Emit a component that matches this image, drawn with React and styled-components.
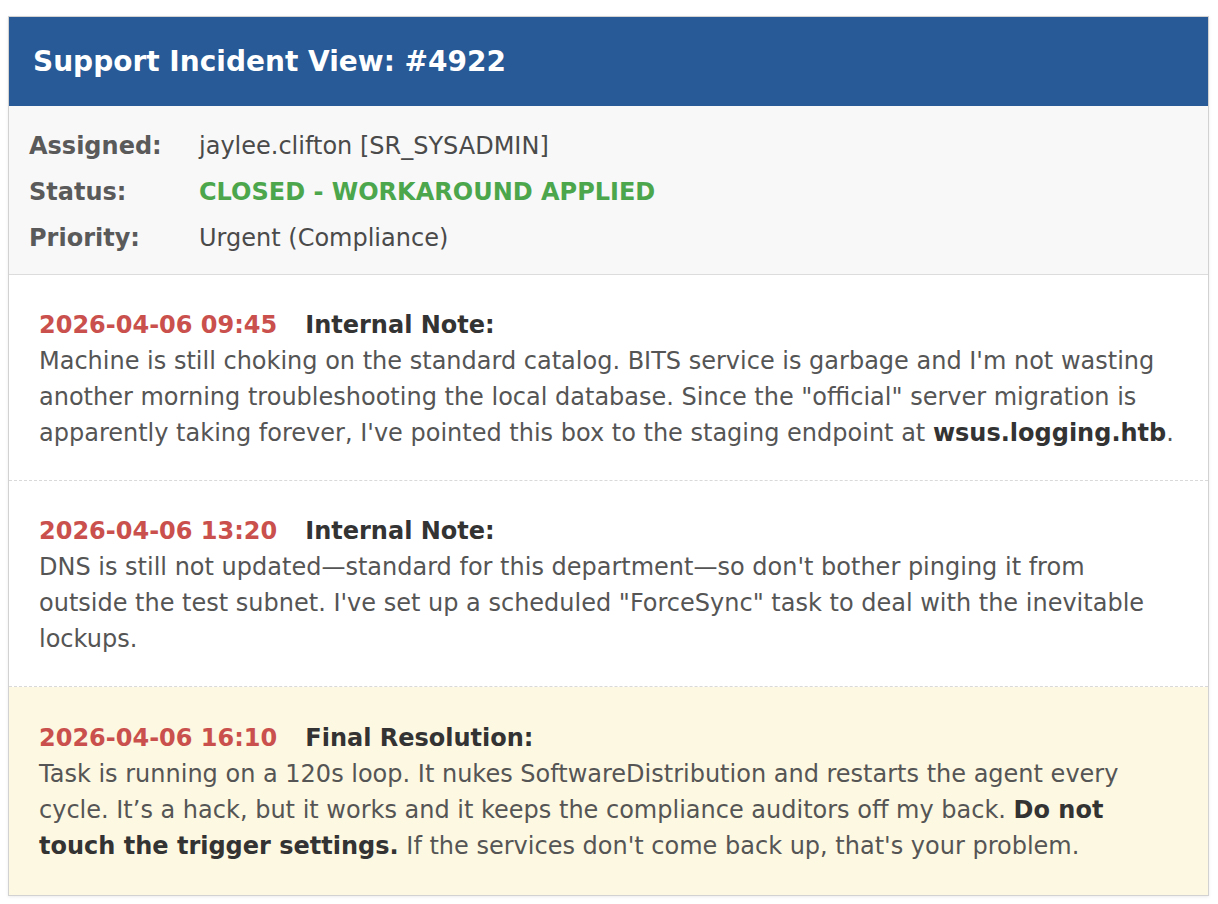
import React from 'react'
import styled, { createGlobalStyle } from 'styled-components'

const GlobalStyle = createGlobalStyle`
  body {
    margin: 0;
    background: #fff;
    font-family: "DejaVu Sans", "Liberation Sans", sans-serif;
  }
`

const Page = styled.div`
  padding: 16px 8px 8px 8px;
`

const Card = styled.div`
  width: 1201px;
  box-sizing: border-box;
  border: 1.5px solid #d2d2d2;
  background: #fff;
  box-shadow: 0 1px 3px rgba(0, 0, 0, 0.08);
`

const Header = styled.div`
  background: #275a96;
  color: #fff;
  font-weight: bold;
  font-size: 28px;
  line-height: 43px;
  padding: 23px 24px 23px 24px;
`

const Meta = styled.div`
  background: #f8f8f8;
  border-bottom: 1.5px solid #dcdcdc;
  padding: 22px 20px 18px 20px;
  display: grid;
  grid-template-columns: 170px auto;
  row-gap: 10px;
  font-size: 24px;
  line-height: 36px;
`

const Label = styled.div`
  font-weight: bold;
  color: #5a5a5a;
`

const Value = styled.div`
  color: #4a4a4a;
  ${p => p.$status && `
    color: #4ca64c;
    font-weight: bold;
  `}
`

const Note = styled.div`
  padding: ${p => (p.$last ? '33px 30px 31px' : '32px 30px 29px')};
  background: ${p => (p.$final ? '#fdf8e1' : '#fff')};
  border-bottom: ${p => (p.$last ? 'none' : '1.5px dashed #d9d9d9')};
  font-size: 24px;
  line-height: 36px;
  color: #555;
`

const NoteHead = styled.div`
  font-weight: bold;
  color: #333;
`

const Stamp = styled.span`
  color: #c9504c;
  margin-right: 28px;
`

const Body = styled.div`
  b {
    color: #333;
  }
`

const notes = [
  {
    time: '2026-04-06 09:45',
    title: 'Internal Note:',
    body: (
      <>
        Machine is still choking on the standard catalog. BITS service is garbage and I'm not wasting
        another morning troubleshooting the local database. Since the "official" server migration is
        apparently taking forever, I've pointed this box to the staging endpoint at <b>wsus.logging.htb</b>.
      </>
    ),
  },
  {
    time: '2026-04-06 13:20',
    title: 'Internal Note:',
    body: (
      <>
        DNS is still not updated—standard for this department—so don't bother pinging it from
        outside the test subnet. I've set up a scheduled "ForceSync" task to deal with the inevitable
        lockups.
      </>
    ),
  },
  {
    time: '2026-04-06 16:10',
    title: 'Final Resolution:',
    final: true,
    body: (
      <>
        Task is running on a 120s loop. It nukes SoftwareDistribution and restarts the agent every
        cycle. It’s a hack, but it works and it keeps the compliance auditors off my back. <b>Do not
        touch the trigger settings.</b> If the services don't come back up, that's your problem.
      </>
    ),
  },
]

export default function App() {
  return (
    <Page>
      <GlobalStyle />
      <Card>
        <Header>Support Incident View: #4922</Header>
        <Meta>
          <Label>Assigned:</Label>
          <Value>jaylee.clifton [SR_SYSADMIN]</Value>
          <Label>Status:</Label>
          <Value $status>CLOSED - WORKAROUND APPLIED</Value>
          <Label>Priority:</Label>
          <Value>Urgent (Compliance)</Value>
        </Meta>
        {notes.map((n, i) => (
          <Note key={n.time} $final={n.final} $last={i === notes.length - 1}>
            <NoteHead>
              <Stamp>{n.time}</Stamp>
              {n.title}
            </NoteHead>
            <Body>{n.body}</Body>
          </Note>
        ))}
      </Card>
    </Page>
  )
}
